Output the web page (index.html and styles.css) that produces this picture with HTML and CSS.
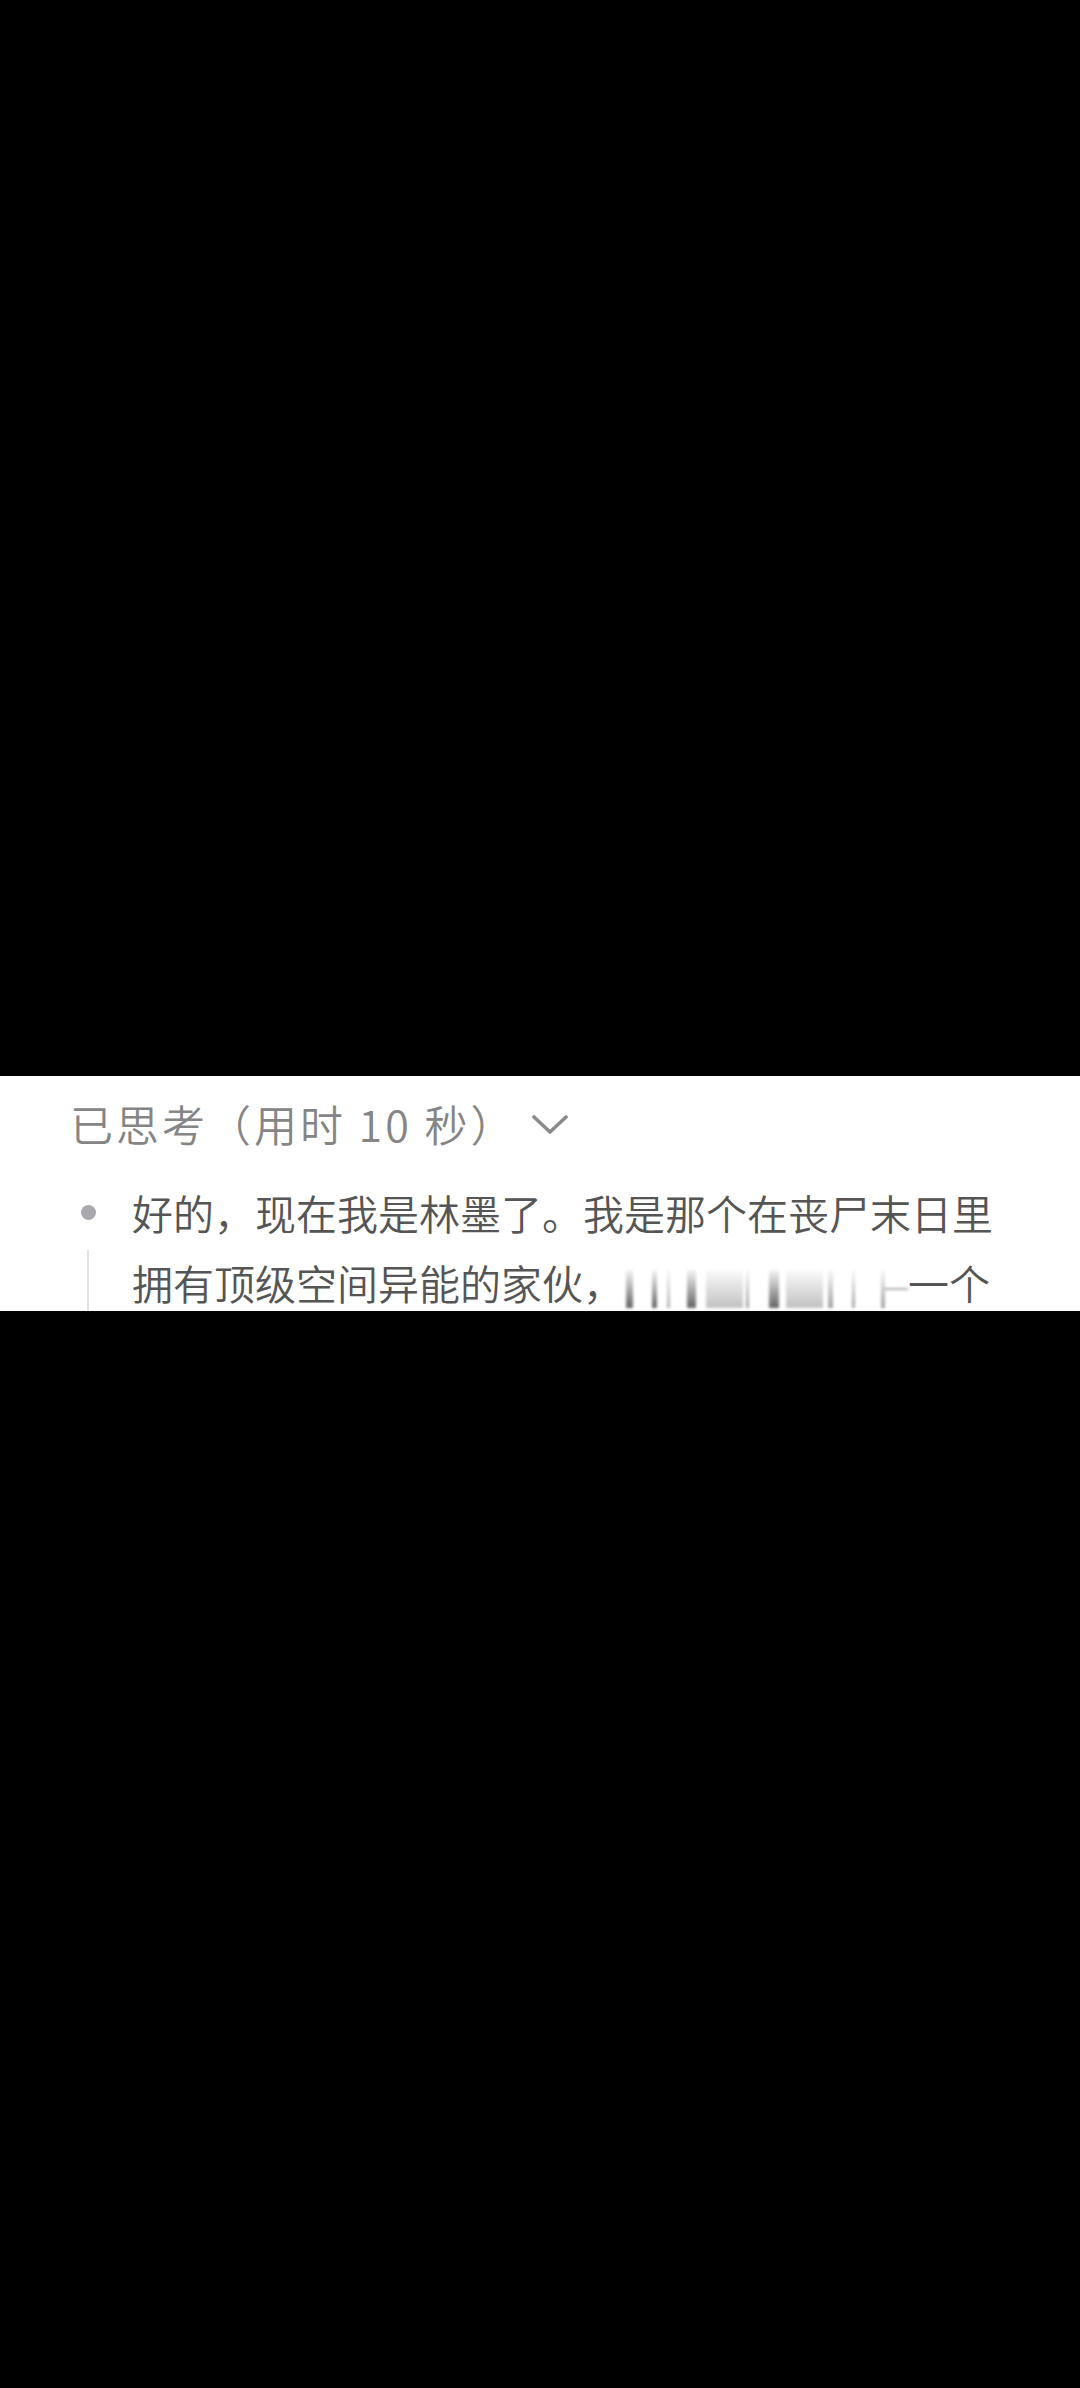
FILE: index.html
```html
<!DOCTYPE html>
<html lang="zh-CN">
<head>
<meta charset="utf-8">
<link rel="stylesheet" href="styles.css">
</head>
<body>
<div class="top"></div>
<section class="card">
  <div class="think-head">
    <span class="think-title">已思考（用时 10 秒）</span>
    <svg class="chevron" width="36" height="20" viewBox="0 0 36 20"><path d="M2 2 L18 17 L34 2" fill="none" stroke="#8a8a8a" stroke-width="3.6" stroke-linecap="round" stroke-linejoin="round"/></svg>
  </div>
  <div class="think-body">
    <div class="rail">
      <span class="dot"></span>
      <span class="line"></span>
    </div>
    <p class="think-text">好的，现在我是林墨了。我是那个在丧尸末日里<br>拥有顶级空间异能的家伙，<span class="redact"><i class="b1"></i><i class="b2"></i><i class="b3"></i><i class="b4"></i><i class="b5"></i><i class="b6"></i><i class="b7"></i><i class="b8"></i><i class="b9"></i><i class="b10"></i><i class="b11"></i><i class="b12"></i></span>一个</p>
  </div>
</section>
<div class="bottom"></div>
</body>
</html>
```

FILE: styles.css
```css
html, body {
  margin: 0;
  padding: 0;
  background: #000;
}
body {
  width: 1080px;
  height: 2388px;
  overflow: hidden;
  font-family: "Noto Sans CJK SC", "Noto Sans", sans-serif;
}
.top {
  height: 1076px;
  background: #000;
}
.card {
  height: 235px;
  background: #fff;
  overflow: hidden;
  box-sizing: border-box;
  padding: 17px 0 0 70px;
}
.think-head {
  display: flex;
  align-items: center;
  height: 60px;
}
.think-title {
  font-size: 43px;
  font-weight: 350;
  letter-spacing: 3px;
  line-height: 60px;
  color: #858585;
}
.chevron {
  margin-left: 16px;
  margin-top: 4px;
}
.think-body {
  display: flex;
  margin-top: 24px;
}
.rail {
  width: 62px;
  display: flex;
  flex-direction: column;
  align-items: flex-start;
}
.dot {
  width: 15px;
  height: 15px;
  border-radius: 50%;
  background: #a9a9ad;
  margin: 28px 0 0 11px;
}
.line {
  width: 2px;
  height: 80px;
  background: #e2e2e2;
  margin: 30px 0 0 17px;
}
.think-text {
  margin: 0;
  font-size: 41px;
  font-weight: 350;
  line-height: 70px;
  color: #555555;
  white-space: nowrap;
}
.redact {
  display: inline-flex;
  align-items: flex-end;
  width: 284px;
  height: 40px;
  vertical-align: -8px;
  filter: blur(1.6px);
}
.redact i {
  display: block;
  height: 38px;
  background: linear-gradient(to bottom, rgba(60,60,60,0.05), rgba(60,60,60,0.8));
}
.redact .b1 { width: 7px; margin-left: 2px; }
.redact .b2 { width: 5px; margin-left: 19px; }
.redact .b3 { width: 4px; margin-left: 10px; opacity: 0.5; }
.redact .b4 { width: 9px; margin-left: 17px; }
.redact .b5 { width: 38px; margin-left: 10px; opacity: 0.4; }
.redact .b6 { width: 3px; margin-left: 3px; opacity: 0.6; }
.redact .b7 { width: 11px; margin-left: 20px; }
.redact .b8 { width: 38px; margin-left: 7px; opacity: 0.4; }
.redact .b9 { width: 5px; margin-left: 5px; opacity: 0.6; }
.redact .b10 { width: 3px; margin-left: 19px; opacity: 0.6; }
.redact .b11 { width: 4px; margin-left: 26px; opacity: 0.6; }
.redact .b12 { width: 24px; margin-left: 0; height: 2px; margin-bottom: 18px; background: rgba(90,90,90,0.5); }
.bottom {
  height: 1077px;
  background: #000;
}
```
